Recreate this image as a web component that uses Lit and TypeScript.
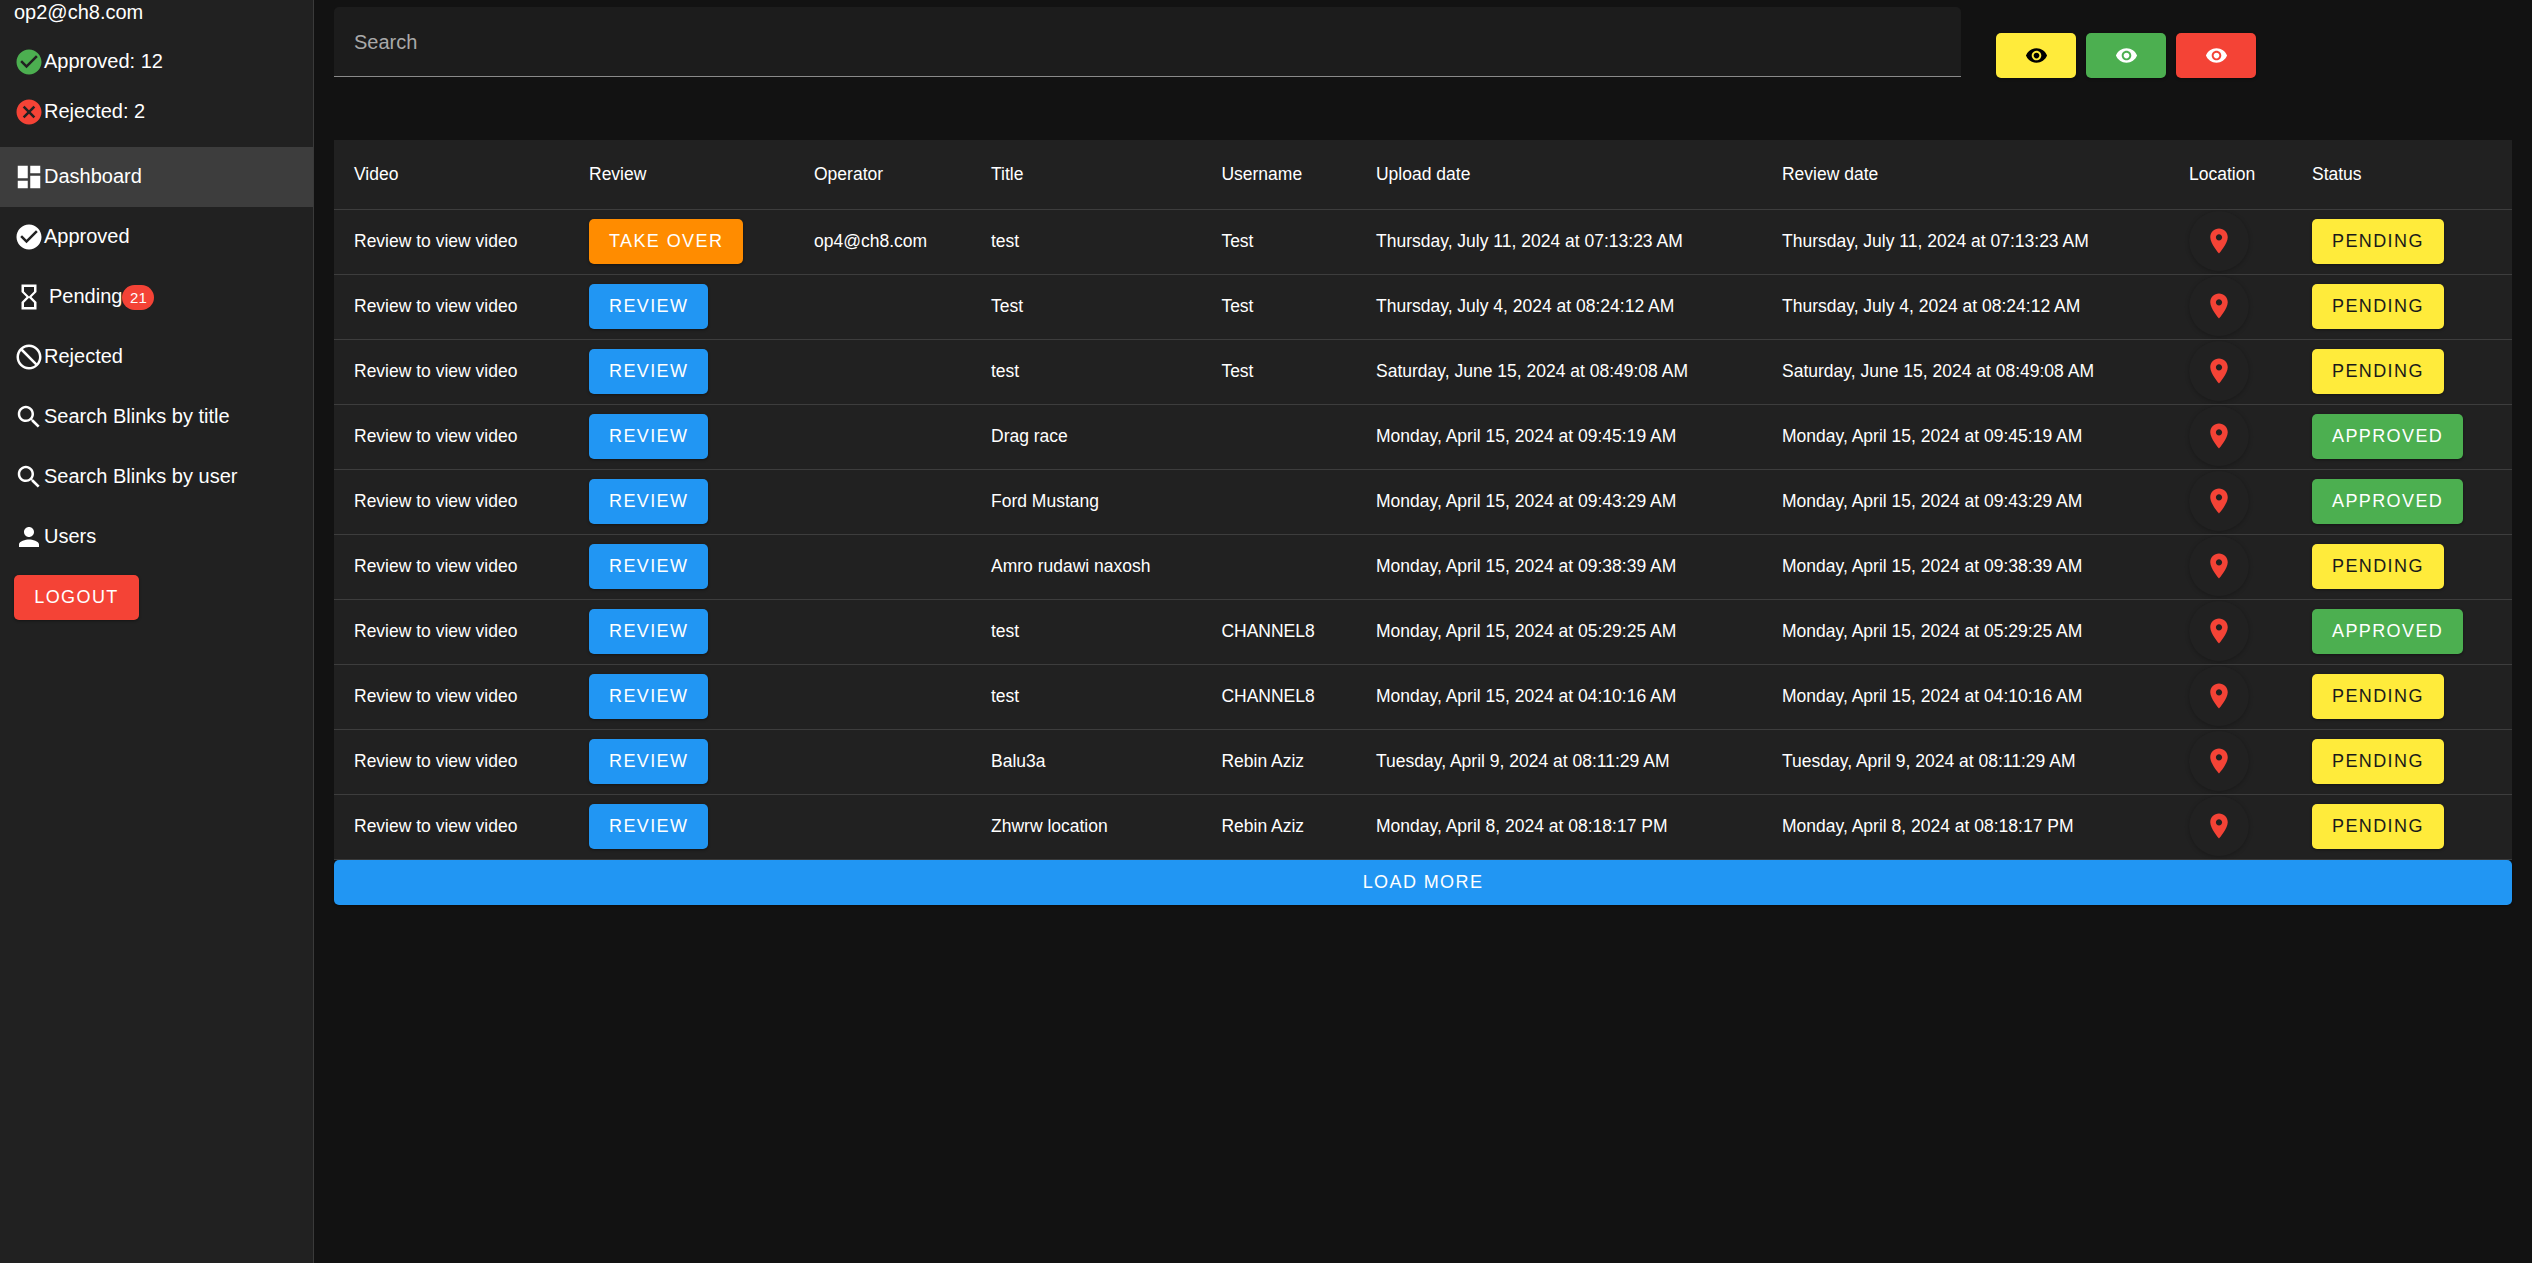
import { LitElement, html, css, svg } from "lit";
import { customElement } from "lit/decorators.js";

const P = {
  check: "M12 2C6.48 2 2 6.48 2 12s4.48 10 10 10 10-4.48 10-10S17.52 2 12 2zm-2 15l-5-5 1.41-1.41L10 14.17l7.59-7.59L19 8l-9 9z",
  cancel: "M12 2C6.47 2 2 6.47 2 12s4.47 10 10 10 10-4.47 10-10S17.53 2 12 2zm5 13.59L15.59 17 12 13.41 8.41 17 7 15.59 10.59 12 7 8.41 8.41 7 12 10.59 15.59 7 17 8.41 13.41 12 17 15.59z",
  dash: "M3 13h8V3H3v10zm0 8h8v-6H3v6zm10 0h8V11h-8v10zm0-18v6h8V3h-8z",
  hour: "M6 2v6h.01L6 8.01 10 12l-4 4 .01.01H6V22h12v-5.99h-.01L18 16l-4-4 4-3.99-.01-.01H18V2H6zm10 14.5V20H8v-3.5l4-4 4 4zm-4-5l-4-4V4h8v3.5l-4 4z",
  block: "M12 2C6.48 2 2 6.48 2 12s4.48 10 10 10 10-4.48 10-10S17.52 2 12 2zm0 18c-4.42 0-8-3.58-8-8 0-1.85.63-3.55 1.69-4.9L16.9 18.31C15.55 19.37 13.85 20 12 20zm6.31-3.1L7.1 5.69C8.45 4.63 10.15 4 12 4c4.42 0 8 3.58 8 8 0 1.85-.63 3.55-1.69 4.9z",
  search: "M15.5 14h-.79l-.28-.27C15.41 12.59 16 11.11 16 9.5 16 5.91 13.09 3 9.5 3S3 5.91 3 9.5 5.91 16 9.5 16c1.61 0 3.09-.59 4.23-1.57l.27.28v.79l5 4.99L20.49 19l-4.99-5zm-6 0C7.01 14 5 11.99 5 9.5S7.01 5 9.5 5 14 7.01 14 9.5 11.99 14 9.5 14z",
  person: "M12 12c2.21 0 4-1.79 4-4s-1.79-4-4-4-4 1.79-4 4 1.79 4 4 4zm0 2c-2.67 0-8 1.34-8 4v2h16v-2c0-2.66-5.33-4-8-4z",
  eye: "M12 4.5C7 4.5 2.73 7.61 1 12c1.73 4.39 6 7.5 11 7.5s9.27-3.11 11-7.5c-1.73-4.39-6-7.5-11-7.5zM12 17c-2.76 0-5-2.24-5-5s2.24-5 5-5 5 2.24 5 5-2.24 5-5 5zm0-8c-1.66 0-3 1.34-3 3s1.34 3 3 3 3-1.34 3-3-1.34-3-3-3z",
  room: "M12 2C8.13 2 5 5.13 5 9c0 5.25 7 13 7 13s7-7.75 7-13c0-3.87-3.13-7-7-7zm0 9.5c-1.38 0-2.5-1.12-2.5-2.5s1.12-2.5 2.5-2.5 2.5 1.12 2.5 2.5-1.12 2.5-2.5 2.5z",
};

const icon = (d: string, cls = "") =>
  html`<svg class="ic ${cls}" viewBox="0 0 24 24" fill="currentColor">${svg`<path d=${d}></path>`}</svg>`;

type Row = [string, string, string, string, string, "PENDING" | "APPROVED"];
const rows: Row[] = [
  ["test", "Test", "Thursday, July 11, 2024 at 07:13:23 AM", "op4@ch8.com", "TAKE OVER", "PENDING"],
  ["Test", "Test", "Thursday, July 4, 2024 at 08:24:12 AM", "", "REVIEW", "PENDING"],
  ["test", "Test", "Saturday, June 15, 2024 at 08:49:08 AM", "", "REVIEW", "PENDING"],
  ["Drag race", "", "Monday, April 15, 2024 at 09:45:19 AM", "", "REVIEW", "APPROVED"],
  ["Ford Mustang", "", "Monday, April 15, 2024 at 09:43:29 AM", "", "REVIEW", "APPROVED"],
  ["Amro rudawi naxosh", "", "Monday, April 15, 2024 at 09:38:39 AM", "", "REVIEW", "PENDING"],
  ["test", "CHANNEL8", "Monday, April 15, 2024 at 05:29:25 AM", "", "REVIEW", "APPROVED"],
  ["test", "CHANNEL8", "Monday, April 15, 2024 at 04:10:16 AM", "", "REVIEW", "PENDING"],
  ["Balu3a", "Rebin Aziz", "Tuesday, April 9, 2024 at 08:11:29 AM", "", "REVIEW", "PENDING"],
  ["Zhwrw location", "Rebin Aziz", "Monday, April 8, 2024 at 08:18:17 PM", "", "REVIEW", "PENDING"],
];

const cols = [235, 225, 177, 230.4, 154.6, 406, 407, 123, 220];
const heads = ["Video", "Review", "Operator", "Title", "Username", "Upload date", "Review date", "Location", "Status"];

@customElement("app-root")
export class AppRoot extends LitElement {
  static styles = css`
    :host {
      display: block;
      height: 1263px;
      background: #121212;
      color: #fff;
      font-family: "Liberation Sans", Arial, sans-serif;
      overflow: hidden;
    }
    .page { display: flex; height: 100%; }
    .side {
      width: 313px;
      flex: none;
      box-sizing: content-box;
      background: #212121;
      border-right: 1px solid #3a3a3a;
      font-size: 20px;
      line-height: 30px;
    }
    .ic { width: 30px; height: 30px; flex: none; display: block; }
    .email { padding-left: 14px; height: 24px; line-height: 24px; }
    .stat { display: flex; align-items: center; height: 50px; padding-left: 14px; }
    .stat.first { margin-top: 13px; }
    .stat span, .item span { margin-bottom: 2px; }
    .green { color: #4caf50; }
    .red { color: #f44336; }
    .nav { margin-top: 10px; }
    .item { display: flex; align-items: center; height: 60px; padding-left: 14px; }
    .item.on { background: #3d3d3d; }
    .item .pend { margin-left: 5px; }
    .item .badge {
      background: #f44336;
      border-radius: 13px;
      width: 32px;
      height: 25px;
      line-height: 25px;
      font-size: 15px;
      text-align: center;
      margin-bottom: 0;
    }
    .logout {
      margin: 8px 0 0 14px;
      width: 125px;
      height: 45px;
      background: #f44336;
    }
    button {
      border: 0;
      padding: 0;
      color: #fff;
      font-family: inherit;
      font-size: 18px;
      letter-spacing: 1.4px;
      border-radius: 5px;
      display: inline-flex;
      align-items: center;
      justify-content: center;
      box-shadow: 0 1px 3px rgba(0, 0, 0, 0.4);
    }
    .main { flex: 1; padding: 0 20px; min-width: 0; }
    .top { display: flex; align-items: flex-start; height: 140px; }
    .field {
      width: 1627px;
      height: 70px;
      margin-top: 7px;
      box-sizing: border-box;
      background: #1c1c1c;
      border-bottom: 1px solid #8a8a8a;
      border-radius: 5px 5px 0 0;
      padding: 0 20px;
      line-height: 70px;
      font-size: 20px;
      color: #a9a9a9;
    }
    .eyes { display: flex; gap: 10px; margin: 33px 0 0 35px; }
    .eyes button { width: 80px; height: 45px; }
    .eyes .ic { width: 23px; height: 23px; }
    .y { background: #ffeb3b; color: #000; }
    .g { background: #4caf50; color: #fff; }
    .r { background: #f44336; color: #fff; }
    table {
      width: 2178px;
      table-layout: fixed;
      border-collapse: collapse;
      background: #212121;
      font-size: 17.5px;
    }
    th, td {
      padding: 0 0 0 20px;
      text-align: left;
      font-weight: 400;
      border-bottom: 1px solid #3d3d3d;
      white-space: nowrap;
    }
    th { height: 69px; }
    td { height: 62px; padding-bottom: 2px; }
    .act { height: 45px; padding: 0 20px; }
    .orange { background: #ff8c00; }
    .blue { background: #2196f3; }
    .status { height: 45px; padding: 0 20px; }
    .status.p { background: #ffeb3b; color: #1a1a1a; }
    .status.a { background: #4caf50; }
    .pin {
      width: 60px;
      height: 60px;
      border-radius: 50%;
      background: #212121;
      color: #f44336;
      display: flex;
      align-items: center;
      justify-content: center;
      box-shadow: 0 1px 4px rgba(0, 0, 0, 0.25);
    }
    .more { width: 2178px; height: 45px; background: #2196f3; display: flex; }
  `;

  render() {
    return html`<div class="page">
      <aside class="side">
        <div class="email">op2@ch8.com</div>
        <div class="stat first">${icon(P.check, "green")}<span>Approved: 12</span></div>
        <div class="stat">${icon(P.cancel, "red")}<span>Rejected: 2</span></div>
        <nav class="nav">
          <div class="item on">${icon(P.dash)}<span>Dashboard</span></div>
          <div class="item">${icon(P.check)}<span>Approved</span></div>
          <div class="item">${icon(P.hour)}<span class="pend">Pending</span><span class="badge">21</span></div>
          <div class="item">${icon(P.block)}<span>Rejected</span></div>
          <div class="item">${icon(P.search)}<span>Search Blinks by title</span></div>
          <div class="item">${icon(P.search)}<span>Search Blinks by user</span></div>
          <div class="item">${icon(P.person)}<span>Users</span></div>
        </nav>
        <button class="logout">LOGOUT</button>
      </aside>
      <main class="main">
        <div class="top">
          <div class="field">Search</div>
          <div class="eyes">
            <button class="y">${icon(P.eye)}</button>
            <button class="g">${icon(P.eye)}</button>
            <button class="r">${icon(P.eye)}</button>
          </div>
        </div>
        <table>
          <colgroup>${cols.map((w) => html`<col style="width:${w}px" />`)}</colgroup>
          <thead><tr>${heads.map((h) => html`<th>${h}</th>`)}</tr></thead>
          <tbody>
            ${rows.map(
              (r) => html`<tr>
                <td>Review to view video</td>
                <td><button class="act ${r[4] === "REVIEW" ? "blue" : "orange"}">${r[4]}</button></td>
                <td>${r[3]}</td>
                <td>${r[0]}</td>
                <td>${r[1]}</td>
                <td>${r[2]}</td>
                <td>${r[2]}</td>
                <td><div class="pin">${icon(P.room)}</div></td>
                <td><button class="status ${r[5] === "PENDING" ? "p" : "a"}">${r[5]}</button></td>
              </tr>`
            )}
          </tbody>
        </table>
        <button class="more">LOAD MORE</button>
      </main>
    </div>`;
  }
}
